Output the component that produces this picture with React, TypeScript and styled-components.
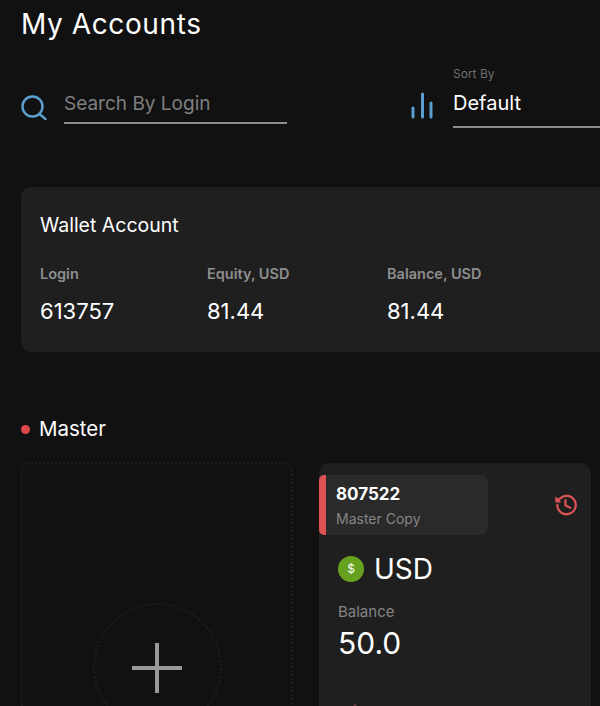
import styled, { createGlobalStyle } from "styled-components";

const Global = createGlobalStyle`
  html, body {
    margin: 0;
    padding: 0;
    height: 100%;
    overflow: hidden;
    background: #111112;
  }
  * {
    box-sizing: border-box;
  }
`;

const Page = styled.div`
  width: 600px;
  height: 706px;
  overflow: hidden;
  padding: 5px 0 0 21px;
  background: #111112;
  color: #fff;
  font-family: Inter, Roboto, "Liberation Sans", sans-serif;
`;

const Title = styled.h1`
  margin: 0;
  font-size: 28px;
  line-height: 38px;
  font-weight: 400;
  letter-spacing: 0.6px;
`;

const Filters = styled.div`
  display: flex;
  margin-top: 21px;
  height: 64px;
`;

const SearchGroup = styled.div`
  display: flex;
  align-items: flex-end;
  width: 389px;
  flex: none;
`;

const IconSlot = styled.div`
  width: 43px;
  height: 32px;
  flex: none;
  display: flex;
  align-items: center;
  margin-bottom: ${(p: { $lift: number }) => p.$lift}px;
`;

const SearchField = styled.div`
  width: 223px;
  height: 39px;
  margin-bottom: 4px;
  padding-top: 7px;
  border-bottom: 2px solid #8c8c8c;
  color: #7f7f7f;
  font-size: 19px;
  line-height: 24px;
`;

const SortGroup = styled.div`
  display: flex;
  align-items: flex-end;
  flex: 1;
  min-width: 0;
`;

const SortField = styled.div`
  flex: 1;
  height: 64px;
  padding-top: 2px;
  border-bottom: 2px solid #8c8c8c;
`;

const SortLabel = styled.div`
  color: #6f6f6f;
  font-size: 12px;
  line-height: 16px;
`;

const SortValue = styled.div`
  margin-top: 8px;
  font-size: 20px;
  line-height: 26px;
`;

const WalletCard = styled.section`
  margin-top: 59px;
  width: 600px;
  height: 165px;
  padding: 25px 19px;
  background: #1f1f20;
  border-radius: 10px 0 0 10px;
`;

const CardTitle = styled.h2`
  margin: 0;
  font-size: 19.5px;
  line-height: 26px;
  font-weight: 400;
`;

const Stats = styled.div`
  display: grid;
  grid-template-columns: 167px 180px 1fr;
  margin-top: 27px;
`;

const StatLabel = styled.div`
  color: #8e8e8e;
  font-size: 14.5px;
  line-height: 18px;
  font-weight: 600;
`;

const StatValue = styled.div`
  margin-top: 15px;
  font-size: 22px;
  line-height: 26px;
`;

const SectionHead = styled.div`
  display: flex;
  align-items: center;
  gap: 9px;
  margin-top: 63px;
  font-size: 20.5px;
  line-height: 28px;
`;

const Dot = styled.span`
  width: 9px;
  height: 9px;
  border-radius: 50%;
  background: #e0474c;
`;

const Cards = styled.div`
  display: flex;
  align-items: flex-start;
  gap: 26px;
  margin-top: 19px;
`;

const AddCard = styled.div`
  width: 272px;
  height: 320px;
  flex: none;
  display: flex;
  justify-content: center;
  padding-top: 139px;
  border: 2px dotted #1e1e1f;
  border-radius: 10px;
`;

const AddCircle = styled.div`
  width: 129px;
  height: 129px;
  display: flex;
  align-items: center;
  justify-content: center;
  border: 2px dotted #1e1e1f;
  border-radius: 50%;
`;

const AccountCard = styled.div`
  width: 272px;
  height: 320px;
  flex: none;
  margin-top: 1px;
  padding-top: 12px;
  background: #1f1f20;
  border-radius: 10px;
`;

const CardTop = styled.div`
  display: flex;
  align-items: center;
  justify-content: space-between;
  padding-right: 12px;
`;

const Badge = styled.div`
  width: 169px;
  height: 60px;
  padding: 9px 0 0 10px;
  background: #2a2a2b;
  border-left: 7px solid #dc5356;
  border-radius: 5px 8px 8px 5px;
`;

const BadgeLogin = styled.div`
  font-size: 17px;
  line-height: 20px;
  font-weight: 700;
`;

const BadgeType = styled.div`
  margin-top: 6px;
  color: #858585;
  font-size: 14px;
  line-height: 18px;
`;

const Currency = styled.div`
  display: flex;
  align-items: center;
  gap: 10px;
  margin: 15px 0 0 19px;
  font-size: 28px;
  line-height: 38px;
`;

const Coin = styled.span`
  width: 26px;
  height: 26px;
  display: flex;
  align-items: center;
  justify-content: center;
  background: #66a11f;
  border-radius: 50%;
  font-size: 12px;
`;

const BalanceLabel = styled.div`
  margin: 15px 0 0 19px;
  color: #858585;
  font-size: 15px;
  line-height: 18px;
`;

const BalanceValue = styled.div`
  margin: 5px 0 0 19px;
  font-size: 30px;
  line-height: 34px;
`;

const NextRowTip = styled.div`
  width: 0;
  height: 0;
  margin: 43px 0 0 34px;
  border-left: 2px solid transparent;
  border-right: 2px solid transparent;
  border-bottom: 3px solid #5a3a3a;
`;

export default function App() {
  return (
    <Page>
      <Global />
      <Title>My Accounts</Title>
      <Filters>
        <SearchGroup>
          <IconSlot $lift={4}>
            <svg width="26" height="26" viewBox="0 0 26 26" fill="none" stroke="#5b9fd0" strokeWidth="2.4" strokeLinecap="round">
              <circle cx="11.5" cy="11.5" r="10" />
              <path d="M19 19.5l5.5 4.5" />
            </svg>
          </IconSlot>
          <SearchField>Search By Login</SearchField>
        </SearchGroup>
        <SortGroup>
          <IconSlot $lift={7}>
            <svg width="26" height="28" viewBox="0 0 26 28" fill="none" stroke="#5b9fd0" strokeWidth="3" strokeLinecap="round">
              <path d="M3 17v9M12.5 3v23M21 12v14" />
            </svg>
          </IconSlot>
          <SortField>
            <SortLabel>Sort By</SortLabel>
            <SortValue>Default</SortValue>
          </SortField>
        </SortGroup>
      </Filters>

      <WalletCard>
        <CardTitle>Wallet Account</CardTitle>
        <Stats>
          <div>
            <StatLabel>Login</StatLabel>
            <StatValue>613757</StatValue>
          </div>
          <div>
            <StatLabel>Equity, USD</StatLabel>
            <StatValue>81.44</StatValue>
          </div>
          <div>
            <StatLabel>Balance, USD</StatLabel>
            <StatValue>81.44</StatValue>
          </div>
        </Stats>
      </WalletCard>

      <SectionHead>
        <Dot />
        Master
      </SectionHead>
      <Cards>
        <AddCard>
          <AddCircle>
            <svg width="52" height="52" viewBox="0 0 52 52" fill="none" stroke="#999" strokeWidth="4">
              <path d="M1 26h50M26 1v50" />
            </svg>
          </AddCircle>
        </AddCard>
        <AccountCard>
          <CardTop>
            <Badge>
              <BadgeLogin>807522</BadgeLogin>
              <BadgeType>Master Copy</BadgeType>
            </Badge>
            <svg width="26" height="26" viewBox="0 0 24 24" fill="none" stroke="#dc5356" strokeWidth="2.1" strokeLinecap="round" strokeLinejoin="round">
              <path d="M4 12a8.5 8.5 0 1 0 2.6-6.1L3.8 8.2" />
              <path d="M2.6 5v4.2h4.2z" fill="#dc5356" strokeWidth="1" />
              <path d="M11.5 7.5v5l4.5 2" />
            </svg>
          </CardTop>
          <Currency>
            <Coin>$</Coin>
            USD
          </Currency>
          <BalanceLabel>Balance</BalanceLabel>
          <BalanceValue>50.0</BalanceValue>
          <NextRowTip />
        </AccountCard>
      </Cards>
    </Page>
  );
}
